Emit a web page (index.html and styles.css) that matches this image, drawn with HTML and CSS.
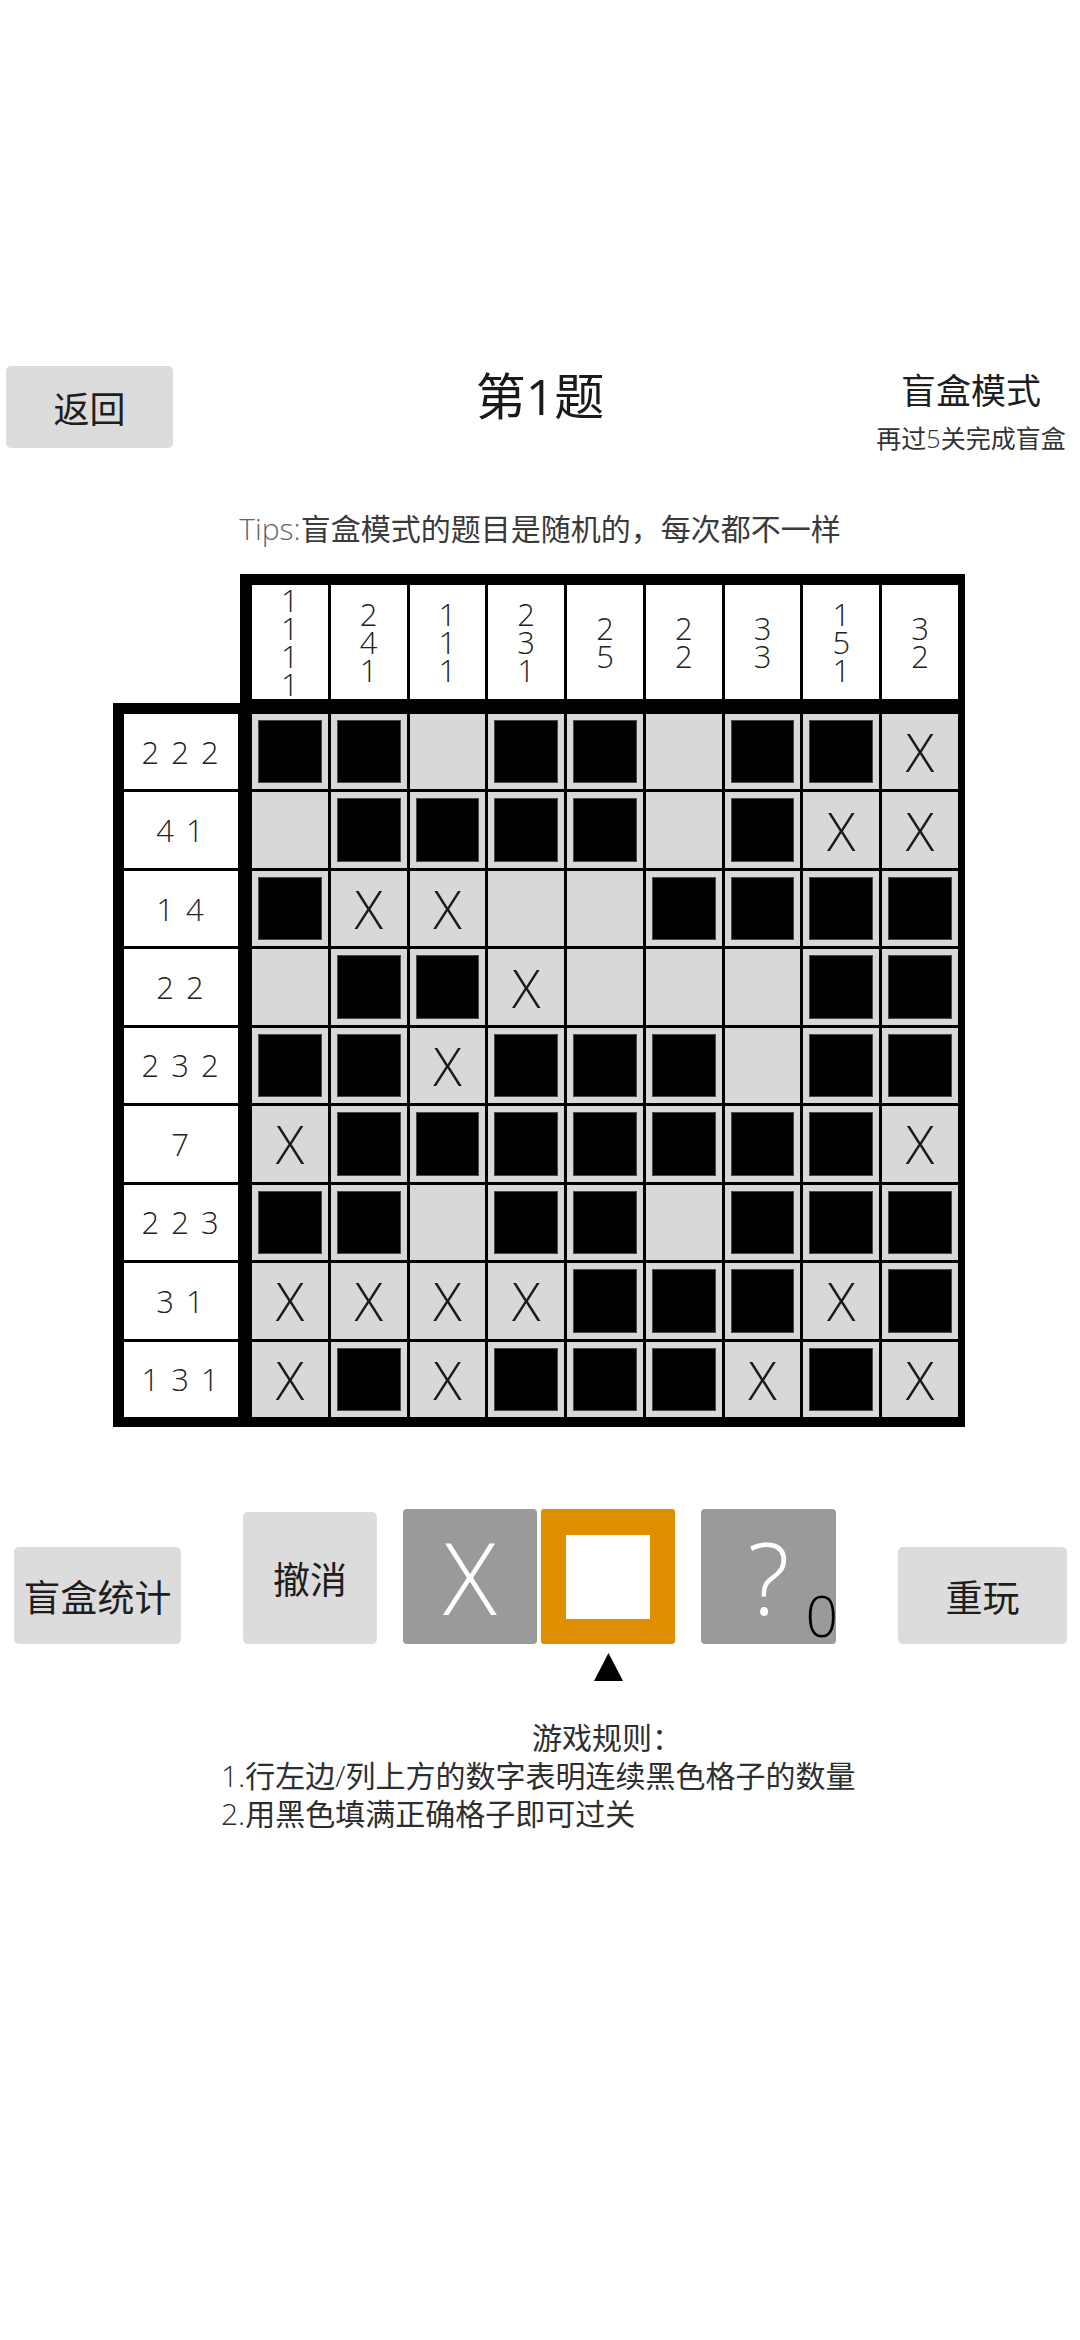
FILE: index.html
```html
<!DOCTYPE html>
<html lang="zh-CN">
<head>
<meta charset="utf-8">
<title>第1题</title>
<link rel="stylesheet" href="styles.css">
</head>
<body>
<div class="page">
  <header class="top">
    <div class="btn back">返回</div>
    <div class="title">第<span class="lat">1</span>题</div>
    <div class="mode">
      <div class="mode-name">盲盒模式</div>
      <div class="mode-sub">再过<span class="lat-l">5</span>关完成盲盒</div>
    </div>
  </header>

  <p class="tips"><span class="tips-key">Tips:</span>盲盒模式的题目是随机的，每次都不一样</p>

  <div class="board">
    <div class="col-clues">
      <div class="cc">1<br>1<br>1<br>1</div>
      <div class="cc">2<br>4<br>1</div>
      <div class="cc">1<br>1<br>1</div>
      <div class="cc">2<br>3<br>1</div>
      <div class="cc">2<br>5</div>
      <div class="cc">2<br>2</div>
      <div class="cc">3<br>3</div>
      <div class="cc">1<br>5<br>1</div>
      <div class="cc">3<br>2</div>
    </div>
    <div class="main">
      <div class="row-clues">
        <div class="rc">2 2 2</div>
        <div class="rc">4 1</div>
        <div class="rc">1 4</div>
        <div class="rc">2 2</div>
        <div class="rc">2 3 2</div>
        <div class="rc">7</div>
        <div class="rc">2 2 3</div>
        <div class="rc">3 1</div>
        <div class="rc">1 3 1</div>
      </div>
      <div class="cells">
        <div class="c b"></div><div class="c b"></div><div class="c"></div><div class="c b"></div><div class="c b"></div><div class="c"></div><div class="c b"></div><div class="c b"></div><div class="c x">X</div>
        <div class="c"></div><div class="c b"></div><div class="c b"></div><div class="c b"></div><div class="c b"></div><div class="c"></div><div class="c b"></div><div class="c x">X</div><div class="c x">X</div>
        <div class="c b"></div><div class="c x">X</div><div class="c x">X</div><div class="c"></div><div class="c"></div><div class="c b"></div><div class="c b"></div><div class="c b"></div><div class="c b"></div>
        <div class="c"></div><div class="c b"></div><div class="c b"></div><div class="c x">X</div><div class="c"></div><div class="c"></div><div class="c"></div><div class="c b"></div><div class="c b"></div>
        <div class="c b"></div><div class="c b"></div><div class="c x">X</div><div class="c b"></div><div class="c b"></div><div class="c b"></div><div class="c"></div><div class="c b"></div><div class="c b"></div>
        <div class="c x">X</div><div class="c b"></div><div class="c b"></div><div class="c b"></div><div class="c b"></div><div class="c b"></div><div class="c b"></div><div class="c b"></div><div class="c x">X</div>
        <div class="c b"></div><div class="c b"></div><div class="c"></div><div class="c b"></div><div class="c b"></div><div class="c"></div><div class="c b"></div><div class="c b"></div><div class="c b"></div>
        <div class="c x">X</div><div class="c x">X</div><div class="c x">X</div><div class="c x">X</div><div class="c b"></div><div class="c b"></div><div class="c b"></div><div class="c x">X</div><div class="c b"></div>
        <div class="c x">X</div><div class="c b"></div><div class="c x">X</div><div class="c b"></div><div class="c b"></div><div class="c b"></div><div class="c x">X</div><div class="c b"></div><div class="c x">X</div>
      </div>
    </div>
  </div>

  <div class="controls">
    <div class="btn side">盲盒统计</div>
    <div class="mid">
      <div class="btn undo">撤消</div>
      <div class="tool tool-x">X</div>
      <div class="tool tool-fill"><span class="fill-box"></span>
        <svg class="pointer" width="29" height="28" viewBox="0 0 29 28"><polygon points="14.5,0 29,28 0,28" fill="#000"/></svg>
      </div>
      <div class="tool tool-q">?<span class="count">0</span></div>
    </div>
    <div class="btn side replay">重玩</div>
  </div>

  <div class="rules">
    <div class="rules-title">游戏规则：</div>
    <div class="rules-line"><span class="lat-l">1.</span>行左边<span class="lat-l">/</span>列上方的数字表明连续黑色格子的数量</div>
    <div class="rules-line"><span class="lat-l">2.</span>用黑色填满正确格子即可过关</div>
  </div>
</div>
</body>
</html>
```

FILE: styles.css
```css
html, body {
  margin: 0;
  padding: 0;
  background: #ffffff;
}

body {
  font-family: "Noto Sans CJK SC", "Noto Sans", sans-serif;
  color: #222222;
}

.page {
  width: 1080px;
}

.lat {
  font-family: "Open Sans", "Noto Sans", sans-serif;
  line-height: 1;
}

.lat-l {
  font-family: "Open Sans", "Noto Sans", sans-serif;
  font-weight: 300;
  line-height: 1;
}

/* ---------- header ---------- */
.top {
  display: grid;
  grid-template-columns: 1fr auto 1fr;
  align-items: start;
  padding-top: 366px;
}

.btn {
  background: #dcdcdc;
  border-radius: 5px;
  display: flex;
  align-items: center;
  justify-content: center;
  font-size: 37px;
  color: #1e1e1e;
  box-sizing: border-box;
}

.back {
  justify-self: start;
  margin-left: 6px;
  width: 167px;
  height: 82px;
  font-size: 36px;
}

.title {
  font-size: 50px;
  line-height: 56px;
  margin-top: -1px;
  color: #1a1a1a;
}

.mode {
  justify-self: end;
  margin-right: 14px;
  width: 190px;
  display: flex;
  flex-direction: column;
  align-items: center;
}

.mode-name {
  font-size: 35px;
  line-height: 44px;
  margin-top: 1px;
  color: #1e1e1e;
  white-space: nowrap;
}

.mode-sub {
  font-size: 25px;
  line-height: 34px;
  margin-top: 9px;
  color: #333333;
  white-space: nowrap;
}

/* ---------- tips ---------- */
.tips {
  margin: 53px 0 0 0;
  font-size: 30px;
  line-height: 40px;
  text-align: center;
  color: #3a3a3a;
}

.tips-key {
  font-family: "Open Sans", "Noto Sans", sans-serif;
  font-weight: 300;
  line-height: 1;
  color: #666666;
}

/* ---------- board ---------- */
.board {
  margin: 27px 0 0 113px;
  width: 852px;
}

.col-clues {
  margin-left: 127px;
  width: 725px;
  box-sizing: border-box;
  background: #000;
  padding: 11px 7px 4px 12px;
  display: grid;
  grid-template-columns: repeat(9, 1fr);
  column-gap: 3px;
}

.cc {
  background: #fff;
  height: 114px;
  display: flex;
  align-items: center;
  justify-content: center;
  text-align: center;
  font-family: "Open Sans", "Noto Sans", sans-serif;
  font-weight: 300;
  font-size: 31px;
  line-height: 28px;
  color: #222222;
}

.main {
  background: #000;
  padding: 11px 7px 10px 11px;
  display: flex;
  gap: 14px;
}

.row-clues {
  width: 114px;
  display: grid;
  grid-template-rows: repeat(9, 1fr);
  row-gap: 3px;
}

.rc {
  background: #fff;
  display: flex;
  align-items: center;
  justify-content: center;
  font-family: "Open Sans", "Noto Sans", sans-serif;
  font-weight: 300;
  font-size: 31px;
  letter-spacing: 2px;
  color: #222222;
  white-space: pre;
}

.cells {
  width: 706px;
  height: 703px;
  display: grid;
  grid-template-columns: repeat(9, 1fr);
  grid-template-rows: repeat(9, 1fr);
  gap: 3px;
}

.c {
  background: #d6d8d9;
  box-sizing: border-box;
}

.c.b {
  background: #000;
  border: 6px solid #d6d8d9;
  box-shadow: inset 0 0 0 1px #4a4a4a;
}

.c.x {
  display: flex;
  align-items: center;
  justify-content: center;
  font-family: "Open Sans", "Noto Sans", sans-serif;
  font-weight: 300;
  font-size: 53px;
  color: #1a1a1a;
}

/* ---------- controls ---------- */
.controls {
  margin-top: 82px;
  display: flex;
  justify-content: space-between;
  align-items: flex-end;
  padding: 0 13px 0 14px;
}

.side {
  width: 167px;
  height: 97px;
}

.replay {
  width: 169px;
}

.mid {
  display: flex;
  align-items: flex-end;
}

.undo {
  width: 134px;
  height: 132px;
  margin-right: 26px;
}

.tool {
  position: relative;
  width: 134px;
  height: 135px;
  border-radius: 4px;
  display: flex;
  align-items: center;
  justify-content: center;
  box-sizing: border-box;
}

.tool-x {
  background: #9a9a9a;
  margin-right: 4px;
  color: #ffffff;
  font-family: "Open Sans", "Noto Sans", sans-serif;
  font-weight: 300;
  font-size: 100px;
  line-height: 135px;
}

.tool-fill {
  background: #e08f00;
  margin-right: 26px;
  border-radius: 3px;
}

.fill-box {
  display: block;
  width: 84px;
  height: 84px;
  background: #ffffff;
}

.pointer {
  position: absolute;
  left: 53px;
  top: 144px;
}

.tool-q {
  width: 135px;
  background: #9a9a9a;
  color: #ffffff;
  font-family: "Open Sans", "Noto Sans", sans-serif;
  font-weight: 300;
  font-size: 100px;
  line-height: 135px;
}

.count {
  position: absolute;
  right: -2px;
  bottom: 0;
  font-size: 57px;
  line-height: 57px;
  color: #000000;
}

/* ---------- rules ---------- */
.rules {
  margin: 73px 0 0 221px;
  font-size: 30px;
  line-height: 38px;
  color: #2e2e2e;
}

.rules-title {
  padding-left: 311px;
}
```
